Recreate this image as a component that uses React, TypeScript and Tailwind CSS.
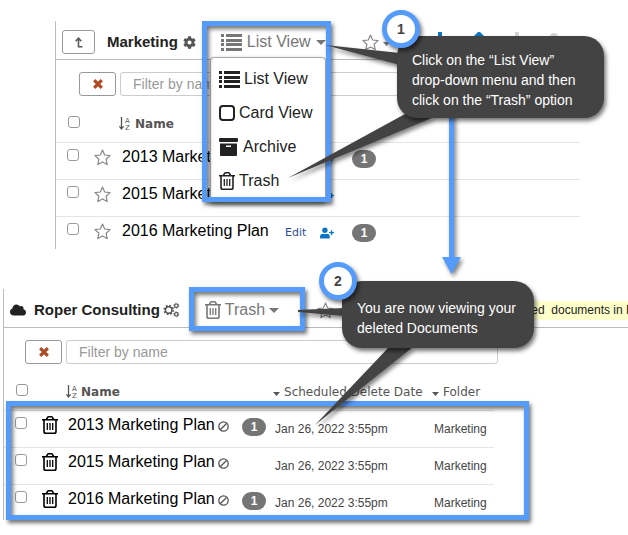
import type { ReactNode } from 'react';
import { FaCloud, FaCog, FaUserPlus } from 'react-icons/fa';

const activeDocs = [
  { name: '2013 Marketing Plan', count: 1 },
  { name: '2015 Marketing Plan', count: 0 },
  { name: '2016 Marketing Plan', count: 1 },
];

const deletedDocs = activeDocs.map((doc) => ({
  ...doc,
  deleteDate: 'Jan 26, 2022 3:55pm',
  folder: 'Marketing',
}));

const SHADOW = 'shadow-[2px_3px_4px_rgba(0,0,0,0.55)]';

function ListIcon() {
  return (
    <svg className="w-[21px] h-[17px] shrink-0" viewBox="0 0 21 17" fill="currentColor" shapeRendering="crispEdges">
      {[0, 5, 9, 14].map((y) => (
        <g key={y}>
          <rect x="0" y={y} width="3" height="3" />
          <rect x="5" y={y} width="16" height="3" />
        </g>
      ))}
    </svg>
  );
}

function TrashIcon() {
  return (
    <svg className="w-4 h-[18px] shrink-0" viewBox="0 0 16 18" fill="none" stroke="currentColor" strokeWidth="1.6">
      <path d="M0 3.8h16M4.3 3.6l1.3-2.3q.3-.5.9-.5h3q.6 0 .9.5l1.3 2.3M2 4v11.4q0 1.8 1.8 1.8h8.4q1.8 0 1.8-1.8V4" />
      <path d="M5.3 7v7M8 7v7M10.7 7v7" strokeWidth="1.3" />
    </svg>
  );
}

function ArchiveIcon() {
  return (
    <svg className="w-[19px] h-[18px] shrink-0" viewBox="0 0 19 18" fill="currentColor">
      <rect x="0" y="0" width="19" height="4" rx="1" />
      <path fillRule="evenodd" d="M1 5.5h17V17q0 1-1 1H2q-1 0-1-1zM7 7.500v1.500h5V7.500z" />
    </svg>
  );
}

function BanIcon() {
  return (
    <svg className="w-[11px] h-[11px] shrink-0 text-[#555]" viewBox="0 0 11 11" fill="none" stroke="currentColor" strokeWidth="1.3">
      <circle cx="5.5" cy="5.5" r="4.7" />
      <path d="M2.2 8.800l6.600-6.600" />
    </svg>
  );
}

function StarIcon() {
  return (
    <svg className="w-[17px] h-[17px] shrink-0 text-[#888]" viewBox="0 0 17 17" fill="none" stroke="currentColor" strokeWidth="1.2" strokeLinejoin="round">
      <path d="M8.5 1l2.2 5 5.4.6-4 3.6 1.1 5.4-4.7-2.7-4.7 2.7 1.1-5.4-4-3.6 5.4-.6z" />
    </svg>
  );
}

function CogsIcon() {
  return (
    <svg className="block w-[17px] h-4 shrink-0 text-[#555]" viewBox="0 0 17 16" fill="none" stroke="currentColor">
      <circle cx="5.700" cy="8" r="3.200" strokeWidth="1.400" />
      <circle cx="5.700" cy="8" r="4.500" strokeWidth="1.700" strokeDasharray="1.800 1.734" />
      <circle cx="13.300" cy="3.700" r="1.700" strokeWidth="1.200" />
      <circle cx="13.300" cy="3.700" r="2.500" strokeDasharray="1.200 1.418" />
      <circle cx="13.300" cy="12.300" r="1.700" strokeWidth="1.200" />
      <circle cx="13.300" cy="12.300" r="2.500" strokeDasharray="1.200 1.418" />
    </svg>
  );
}

function SortIcon() {
  return (
    <svg className="w-3 h-[13px] shrink-0" viewBox="0 0 12 13" fill="none" stroke="currentColor">
      <path d="M2.5 0v11.5M.4 9.3l2.1 2.6 2.1-2.6" strokeWidth="1.3" />
      <text x="6" y="6" fontSize="7" fontWeight="400" fill="currentColor" stroke="none">A</text>
      <text x="6" y="13" fontSize="7" fontWeight="400" fill="currentColor" stroke="none">Z</text>
    </svg>
  );
}

function Caret() {
  return (
    <svg className="w-[10px] h-[5px] shrink-0" viewBox="0 0 10 5" fill="currentColor">
      <path d="M0 0h10L5 5z" />
    </svg>
  );
}

function SmallCaret() {
  return (
    <svg className="mt-1 w-[7px] h-1 shrink-0" viewBox="0 0 7 4" fill="currentColor">
      <path d="M0 0h7L3.5 4z" />
    </svg>
  );
}

function Checkbox({ label }: { label: string }) {
  return (
    <input
      type="checkbox"
      aria-label={label}
      className="block appearance-none w-3 h-3 rounded-[3px] border border-[#999] bg-white"
    />
  );
}

function Badge({ count }: { count: number }) {
  return (
    <span className="flex items-center justify-center w-6 h-[18px] rounded-full bg-[#757575] text-white text-xs font-bold">
      {count}
    </span>
  );
}

function Toolbar({ className }: { className: string }) {
  return (
    <div className={`flex gap-1 pt-3 ${className}`}>
      <button aria-label="Clear filter" className="w-[37px] h-6 shrink-0 flex items-center justify-center rounded-[3px] border border-[#999] text-[#b04a22]">
        <svg className="w-[10px] h-[10px]" viewBox="0 0 10 10" stroke="currentColor" strokeWidth="3.2">
          <path d="M1.2 1.2l7.6 7.6M8.8 1.2L1.2 8.8" />
        </svg>
      </button>
      <input
        type="text"
        aria-label="Filter by name"
        placeholder="Filter by name"
        className="flex-1 min-w-0 h-6 px-3 text-sm rounded-[3px] border border-[#ccc] placeholder:text-[#999]"
      />
    </div>
  );
}

function Highlight({ className }: { className: string }) {
  return (
    <div className={`absolute pointer-events-none border-[5px] border-[#559bfb] ${SHADOW} ${className}`}>
      <div className="w-full h-full shadow-[inset_2px_3px_4px_rgba(0,0,0,0.55)]" />
    </div>
  );
}

function Step({ className, children }: { className: string; children: ReactNode }) {
  return (
    <div className={`absolute w-[38px] h-[38px] rounded-full border-[5px] border-[#559bfb] bg-white flex items-center justify-center text-sm font-bold text-[#444] ${SHADOW} ${className}`}>
      {children}
    </div>
  );
}

function Callout({ className, children }: { className: string; children: ReactNode }) {
  return (
    <p className={`absolute rounded-[20px] bg-[#434343] px-[15px] text-sm leading-5 text-white whitespace-nowrap ${SHADOW} ${className}`}>
      {children}
    </p>
  );
}

function ViewMenu() {
  return (
    <ul className="absolute left-[210px] top-[57px] w-[116px] rounded-[4px] border border-[#aaa] bg-white py-1 pl-2 text-base text-[#222] shadow-[0_2px_4px_rgba(0,0,0,0.4)]">
      <li><button className="flex items-center gap-1 h-[34px]"><ListIcon />List View</button></li>
      <li>
        <button className="flex items-center gap-1 h-[34px]">
          <span className="w-4 h-4 rounded-[4px] border-2 border-[#222]" />
          Card View
        </button>
      </li>
      <li><button className="flex items-center gap-[5px] h-[34px]"><ArchiveIcon />Archive</button></li>
      <li><button className="flex items-center gap-1 h-[34px]"><TrashIcon />Trash</button></li>
    </ul>
  );
}

function MarketingPanel() {
  return (
    <section className="ml-[55px] mr-12 border-l border-[#bbb]">
      <header className="flex items-center h-[39px] pt-1 border-b border-[#bbb] overflow-hidden">
        <button aria-label="Up one level" className="ml-[6px] w-[33px] h-6 shrink-0 flex items-center justify-center rounded-[3px] border border-[#999] text-[#555]">
          <svg className="w-2 h-[11px]" viewBox="0 0 8 11" fill="none" stroke="currentColor" strokeWidth="1.5">
            <path d="M7.5 9.7H3.5V1.5M.7 4.2l2.8-3 2.8 3" />
          </svg>
        </button>
        <h2 className="ml-3 text-[15px] font-bold text-[#222]">Marketing</h2>
        <FaCog className="ml-[5px] w-[13px] h-[13px] shrink-0 text-[#555]" />
        <button className="ml-[25px] flex items-center gap-[5px] text-base text-[#777] whitespace-nowrap">
          <ListIcon />
          List View
          <Caret />
        </button>
        <div className="ml-9 flex items-center gap-1 text-[#777]"><StarIcon /><SmallCaret /></div>
        <svg className="ml-[45px] w-[130px] h-5 shrink-0" viewBox="0 0 130 20" fill="#0b76c1">
          <path d="M3 0h4v8h8v4H7v8H3v-8h-8V8h8z" />
          <path d="M44 -1l9 9h-4v10H39V8h-4z" />
          <path d="M80 0h4v18h-4z" fill="#d5d5d5" />
          <circle cx="119" cy="5" r="4" fill="#d5d5d5" />
        </svg>
      </header>
      <Toolbar className="pl-[23px]" />
      <table className="w-full table-fixed text-left">
        <colgroup>
          <col className="w-[38px]" />
          <col className="w-7" />
          <col className="w-[163px]" />
          <col className="w-[35px]" />
          <col className="w-8" />
          <col />
        </colgroup>
        <thead>
          <tr className="h-[46px]">
            <th className="pl-3 pt-[6px]"><Checkbox label="Select all documents" /></th>
            <th colSpan={5} className="pl-[25px] pt-[10px] font-['DejaVu_Sans',sans-serif] text-xs text-[#555]">
              <span className="flex items-center gap-1"><SortIcon />Name</span>
            </th>
          </tr>
        </thead>
        <tbody>
          {activeDocs.map((doc) => (
            <tr key={doc.name} className="h-[37px] last:h-[33px] align-top border-t border-[#e5e5e5]">
              <td className="pl-[11px] pt-[6px]"><Checkbox label={`Select ${doc.name}`} /></td>
              <td className="pt-[6px]"><StarIcon /></td>
              <td className="pt-[2px] text-base text-black whitespace-nowrap">{doc.name}</td>
              <td className="pt-1 font-['DejaVu_Sans',sans-serif] text-[11px] leading-6 text-[#2a4b8d]"><a href="#edit">Edit</a></td>
              <td className="pt-[10px] text-[#0b76c1]"><FaUserPlus className="w-[14px] h-3" /></td>
              <td className="pt-[7px]">{doc.count > 0 && <Badge count={doc.count} />}</td>
            </tr>
          ))}
        </tbody>
      </table>
    </section>
  );
}

function TrashPanel() {
  return (
    <section className="mt-10 ml-[3px] border-l border-[#bbb]">
      <header className="flex items-center h-[39px] pt-1 border-b border-[#bbb] overflow-hidden whitespace-nowrap">
        <FaCloud className="ml-[6px] w-4 h-[14px] shrink-0 text-[#222]" />
        <h2 className="ml-2 text-[15px] font-bold text-[#222]">Roper Consulting</h2>
        <span className="ml-[3px]"><CogsIcon /></span>
        <button className="ml-[25px] flex items-center gap-1 text-base text-[#777]">
          <TrashIcon />
          Trash
          <Caret />
        </button>
        <span className="ml-[38px]"><StarIcon /></span>
        <p className="ml-[126px] h-[19px] grow bg-[#ffffcc] text-xs leading-[19px] text-[#222] whitespace-pre">
          Viewing deleted  documents in Roper
        </p>
      </header>
      <Toolbar className="pl-[21px] mr-[130px]" />
      <div className="mr-[134px]">
        <table className="w-full table-fixed text-left">
          <colgroup>
            <col className="w-[38px]" />
            <col className="w-[26px]" />
            <col className="w-[174px]" />
            <col className="w-[31px]" />
            <col className="w-[159px]" />
            <col />
          </colgroup>
          <thead className="font-['DejaVu_Sans',sans-serif] text-xs text-[#555]">
            <tr className="h-[46px]">
              <th className="pl-3 pt-[6px]"><Checkbox label="Select all deleted documents" /></th>
              <th colSpan={3} className="pl-6 pt-[10px]">
                <span className="flex items-center gap-[3px]"><SortIcon />Name</span>
              </th>
              <th className="pt-[10px] font-normal whitespace-nowrap">
                <span className="flex items-center gap-1"><SmallCaret />Scheduled Delete Date</span>
              </th>
              <th className="pt-[10px] font-normal">
                <span className="flex items-center gap-1"><SmallCaret />Folder</span>
              </th>
            </tr>
          </thead>
          <tbody>
            {deletedDocs.map((doc) => (
              <tr key={doc.name} className="h-[37px] last:h-9 align-top border-t border-[#e5e5e5]">
                <td className="pl-[11px] pt-[6px]"><Checkbox label={`Select deleted ${doc.name}`} /></td>
                <td className="pt-[5px] text-black"><TrashIcon /></td>
                <td className="pt-[2px] text-base text-black whitespace-nowrap">
                  <span className="flex items-center gap-[3px]">
                    {doc.name}
                    <span className="mt-1"><BanIcon /></span>
                  </span>
                </td>
                <td className="pt-[7px]">{doc.count > 0 && <Badge count={doc.count} />}</td>
                <td className="pl-[2px] pt-[10px] text-xs text-[#444]">{doc.deleteDate}</td>
                <td className="pl-[2px] pt-[10px] text-xs text-[#444]">{doc.folder}</td>
              </tr>
            ))}
          </tbody>
        </table>
      </div>
    </section>
  );
}

export default function App() {
  return (
    <main className="relative overflow-hidden bg-white pt-[21px] pb-4 font-['Liberation_Sans',Arial,sans-serif]">
      <MarketingPanel />
      <TrashPanel />

      <ViewMenu />
      <Highlight className="left-[202px] top-[21px] w-[129px] h-[181px]" />
      <Highlight className="left-[189px] top-[287px] w-[116px] h-[44px]" />
      <Highlight className="left-[6px] top-[401px] w-[523px] h-[119px]" />

      {/* arrow between the two steps and the callout tails */}
      <svg className="absolute left-0 top-0 w-[628px] h-[535px] pointer-events-none drop-shadow-[2px_3px_2px_rgba(0,0,0,0.5)]" viewBox="0 0 628 535">
        <path d="M449 110h5v147h7l-9.500 17-9.500-17h7z" fill="#559bfb" />
        <g fill="#434343">
          <path d="M325 45l75 8v12z" />
          <path d="M288 178l117-64 29 3z" />
          <path d="M298 310l46-2v8l-46-4z" />
          <path d="M315 425l74-78h24z" />
        </g>
      </svg>

      <Callout className="left-[397px] top-9 w-[207px] pt-[14px] pb-2">
        Click on the “List View”
        <br />
        drop-down menu and then
        <br />
        click on the “Trash” option
      </Callout>
      <Callout className="left-[342px] top-[281px] w-[192px] pt-[17px] pb-[10px]">
        You are now viewing your
        <br />
        deleted Documents
      </Callout>
      <Step className="left-[382px] top-[10px]">1</Step>
      <Step className="left-[319px] top-[262px]">2</Step>
    </main>
  );
}
